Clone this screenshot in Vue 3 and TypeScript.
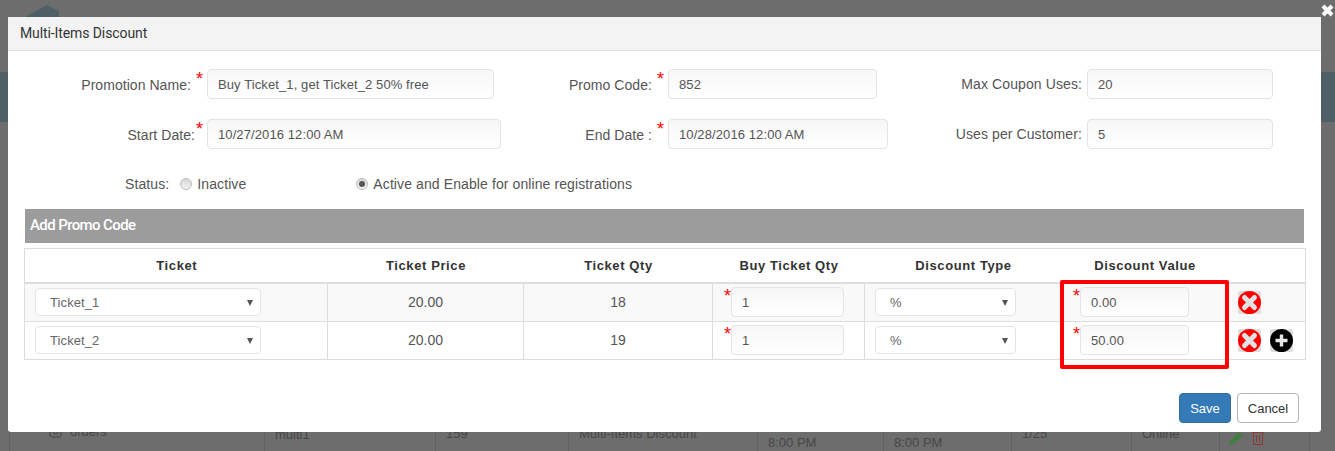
<script setup lang="ts">
interface Row { ticket: string; price: string; qty: string; buy: string; type: string; value: string; add: boolean }
const rows: Row[] = [
  { ticket: 'Ticket_1', price: '20.00', qty: '18', buy: '1', type: '%', value: '0.00', add: false },
  { ticket: 'Ticket_2', price: '20.00', qty: '19', buy: '1', type: '%', value: '50.00', add: true },
]
</script>

<template>
  <div class="page">
    <div class="top"><svg class="logo" width="34" height="13" viewBox="0 0 34 13"><path d="M0 12 L22 0 L34 6 V13 H0Z" fill="#4f5f66" /></svg></div>
    <div class="band"></div>
    <div class="under">
      <div class="c c0">
        <svg class="oi" width="13" height="8" viewBox="0 0 13 8" fill="none" stroke="#474747"><rect x="1" y="-5" width="11" height="12" rx="2" /><circle cx="6.5" cy="2" r="2" /></svg>
        <span class="orders">orders</span>
      </div>
      <div class="c c1"><span class="t1">multi1</span></div>
      <div class="c c2"><span class="t0">159</span></div>
      <div class="c c3"><span class="t0">Multi-Items Discount</span></div>
      <div class="c c4"><span class="t2">8:00 PM</span></div>
      <div class="c c5"><span class="t2">8:00 PM</span></div>
      <div class="c c6"><span class="t0">1/25</span></div>
      <div class="c c7"><span class="t0">Online</span></div>
      <div class="c c8">
        <svg width="16" height="14" viewBox="0 0 16 14"><path d="M1 14 L2 10 L11 1 L15 4 L5 13Z" fill="#3f7f3f" /></svg>
        <svg width="14" height="14" viewBox="0 0 14 14" fill="none" stroke="#8a3a35"><path d="M1 1.5H13M2.5 2V13.5H11.5V2M5.5 4V11.5M8.5 4V11.5" /></svg>
      </div>
    </div>

    <svg class="close" width="15" height="15" viewBox="0 0 15 15"><path d="M3 3 L12 12 M12 3 L3 12" stroke="#fff" stroke-width="4" /></svg>

    <section class="modal">
      <header class="head">Multi-Items Discount</header>
      <div class="form">
        <label class="lab">Promotion Name:<i class="star s5">*</i></label>
        <input class="inp w287" value="Buy Ticket_1, get Ticket_2 50% free" />
        <label class="lab">Promo Code:<i class="star s5">*</i></label>
        <input class="inp w209" value="852" />
        <label class="lab plain">Max Coupon Uses:</label>
        <input class="inp w186" value="20" />

        <label class="lab">Start Date:<i class="star">*</i></label>
        <input class="inp w294" value="10/27/2016 12:00 AM" />
        <label class="lab">End Date :<i class="star s5">*</i></label>
        <input class="inp w220" value="10/28/2016 12:00 AM" />
        <label class="lab plain">Uses per Customer:</label>
        <input class="inp w186" value="5" />
      </div>

      <div class="status">
        <span class="st-label">Status:</span>
        <span class="radio"></span><span class="st-a">Inactive</span>
        <span class="radio on"></span><span>Active and Enable for online registrations</span>
      </div>

      <div class="bar">Add Promo Code</div>

      <table class="tbl">
        <colgroup>
          <col style="width:303px" /><col style="width:196px" /><col style="width:189px" /><col style="width:152px" /><col style="width:197px" /><col style="width:166px" /><col style="width:78px" />
        </colgroup>
        <thead>
          <tr><th>Ticket</th><th>Ticket Price</th><th>Ticket Qty</th><th>Buy Ticket Qty</th><th>Discount Type</th><th>Discount Value</th><th></th></tr>
        </thead>
        <tbody>
          <tr v-for="r in rows" :key="r.ticket">
            <td class="pick"><div class="sel s226">{{ r.ticket }}<b class="arrow"></b></div></td>
            <td class="mid">{{ r.price }}</td>
            <td class="mid">{{ r.qty }}</td>
            <td class="cellin"><i class="star">*</i><input class="inp small w113" :value="r.buy" /></td>
            <td class="pick"><div class="sel s141">{{ r.type }}<b class="arrow"></b></div></td>
            <td class="cellin"><i class="star">*</i><input class="inp small w109" :value="r.value" /></td>
            <td class="acts">
              <svg width="23" height="23" viewBox="0 0 23 23"><rect width="23" height="23" rx="2" fill="#ddd" /><circle cx="11.5" cy="11.5" r="11.5" fill="#f00" /><path d="M6.5 6.5 L16.5 16.5 M16.5 6.5 L6.5 16.5" stroke="#e2e2e2" stroke-width="5" stroke-linecap="round" /></svg>
              <svg v-if="r.add" width="23" height="23" viewBox="0 0 23 23"><rect width="23" height="23" rx="2" fill="#ddd" /><circle cx="11.5" cy="11.5" r="11.5" fill="#000" /><path d="M11.5 5.5 V17.5 M5.5 11.5 H17.5" stroke="#e6e6e6" stroke-width="3.4" /></svg>
            </td>
          </tr>
        </tbody>
      </table>

      <div class="foot">
        <button class="btn save">Save</button>
        <button class="btn cancel">Cancel</button>
      </div>

      <div class="redbox"></div>
    </section>
  </div>
</template>

<style scoped>
.page { position: relative; width: 1335px; height: 451px; overflow: hidden; background: #6d6d6d; font-family: "Liberation Sans", Arial, sans-serif; font-size: 14px; color: #555; display: flex; flex-direction: column; }
.top { height: 72px; flex: none; padding: 5px 0 0 25px; box-sizing: border-box; }
.logo { display: block; }
.band { height: 50px; flex: none; background: #4f5f66; }
.under { margin-top: auto; display: flex; height: 40px; flex: none; color: #474747; font-size: 13px; padding-left: 9px; }
.c { box-sizing: border-box; border-right: 1px solid #606060; padding-left: 10px; padding-top: 15px; height: 100%; }
.c0 { width: 256px; padding-left: 39px; position: relative; border-left: 1px solid #606060; }
.c1 { width: 171px; }
.c2 { width: 133px; }
.c3 { width: 189px; }
.c4 { width: 126px; }
.c5 { width: 128px; }
.c6 { width: 120px; }
.c7 { width: 88px; }
.c8 { width: 90px; padding-left: 8px; display: flex; gap: 7px; padding-top: 20px; }
.t1 { position: relative; top: 1px; }
.t2 { position: relative; top: 9px; }
.orders { position: relative; top: -2px; margin-left: 8px; }
.oi { position: relative; top: 0; }
.close { position: absolute; right: 0; top: 3px; }
.modal { position: absolute; left: 8px; top: 17px; width: 1313px; height: 415px; background: #fff; box-sizing: border-box; border-radius: 3px; }
.head { height: 34px; box-sizing: border-box; background: #f3f3f3; border-bottom: 1px solid #e2e2e2; padding: 8px 12px 0; font-family: Roboto, sans-serif; font-size: 14px; line-height: 17px; color: #333; letter-spacing: -.1px; }
.form { display: grid; grid-template-columns: 199px 303px 158px 232px 187px 186px; row-gap: 20px; margin-top: 18px; align-items: center; letter-spacing: .05px; }
.lab { display: flex; justify-content: flex-end; align-items: center; height: 30px; position: relative; padding-top: 2px; box-sizing: border-box; }
.lab.plain { padding-top: 0; padding-right: 5px; letter-spacing: .1px; }
.star { font-style: normal; color: #f00; font-size: 18px; line-height: 14px; align-self: flex-start; margin: 1px 4px 0 1px; }
.s5 { margin-left: 5px; }
.inp { display: block; box-sizing: border-box; height: 30px; border: 1px solid #e4e4e4; border-radius: 4px; background: linear-gradient(#f7f7f7, #fff); padding: 1px 10px 0; font: 13px "Liberation Sans", Arial, sans-serif; letter-spacing: .1px; color: #555; outline: none; }
.w287 { width: 287px; }
.w294 { width: 294px; }
.w209 { width: 209px; }
.w220 { width: 220px; }
.w186 { width: 186px; }
.w113 { width: 113px; }
.w109 { width: 109px; }
.status { display: flex; align-items: center; height: 20px; margin-top: 25px; padding-left: 117px; letter-spacing: .1px; }
.st-label { margin-right: 11px; }
.st-a { margin-right: 110px; }
.radio { width: 12px; height: 12px; border-radius: 50%; background: linear-gradient(#d8d8d8, #f2f2f2); border: 1px solid #bdbdbd; box-sizing: border-box; margin-right: 5px; position: relative; }
.radio:first-of-type { margin-right: 4px; }
.radio.on::after { content: ""; position: absolute; left: 2px; top: 2px; width: 6px; height: 6px; border-radius: 50%; background: #555; }
.bar { margin: 15px 0 0 17px; width: 1279px; height: 34px; background: #9c9c9c; color: #fff; font: 500 15px/33px Roboto, sans-serif; letter-spacing: -.6px; padding-left: 5px; box-sizing: border-box; }
.tbl { margin: 5px 0 0 16px; width: 1281px; table-layout: fixed; border-collapse: collapse; border: 1px solid #ddd; }
th { height: 33px; padding: 0 0 0 1px; border-bottom: 2px solid #ddd; font-size: 13px; font-weight: 700; color: #333; letter-spacing: .6px; text-align: center; }
td { height: 38px; padding: 0; border: 1px solid #ddd; box-sizing: border-box; vertical-align: middle; }
tbody tr:first-child { background: #f9f9f9; }
.mid { text-align: center; }
.pick { padding-left: 10px; }
.sel { position: relative; box-sizing: border-box; height: 28px; background: #fff; border: 1px solid #e4e4e4; border-radius: 4px; padding-left: 14px; line-height: 28px; font-size: 13px; letter-spacing: .1px; color: #666; }
.s226 { width: 226px; }
.s141 { width: 141px; }
.arrow { position: absolute; right: 7px; top: 11px; border-left: 3.5px solid transparent; border-right: 3.5px solid transparent; border-top: 6px solid #555; }
.cellin { position: relative; padding-left: 18px; }
.cellin .star { position: absolute; left: 11px; top: 5px; margin: 0; }
.small { font-size: 13px; height: 30px; }
.acts { border-right: 1px solid #ddd; padding-left: 10px; }
.acts svg { display: inline-block; vertical-align: middle; margin-right: 9px; }
.foot { display: flex; justify-content: flex-end; gap: 6px; padding: 33px 22px 0 0; }
.btn { height: 30px; box-sizing: border-box; border-radius: 4px; font: 13px "Liberation Sans", Arial, sans-serif; padding: 2px 0 0; }
.save { width: 52px; background: #337ab7; border: 1px solid #2e6da4; color: #fff; }
.cancel { width: 62px; background: #fff; border: 1px solid #b5b5b5; color: #333; }
.redbox { position: absolute; left: 1052px; top: 263px; width: 169px; height: 89px; box-sizing: border-box; border: 4px solid #f00; border-radius: 2px; pointer-events: none; }
</style>
